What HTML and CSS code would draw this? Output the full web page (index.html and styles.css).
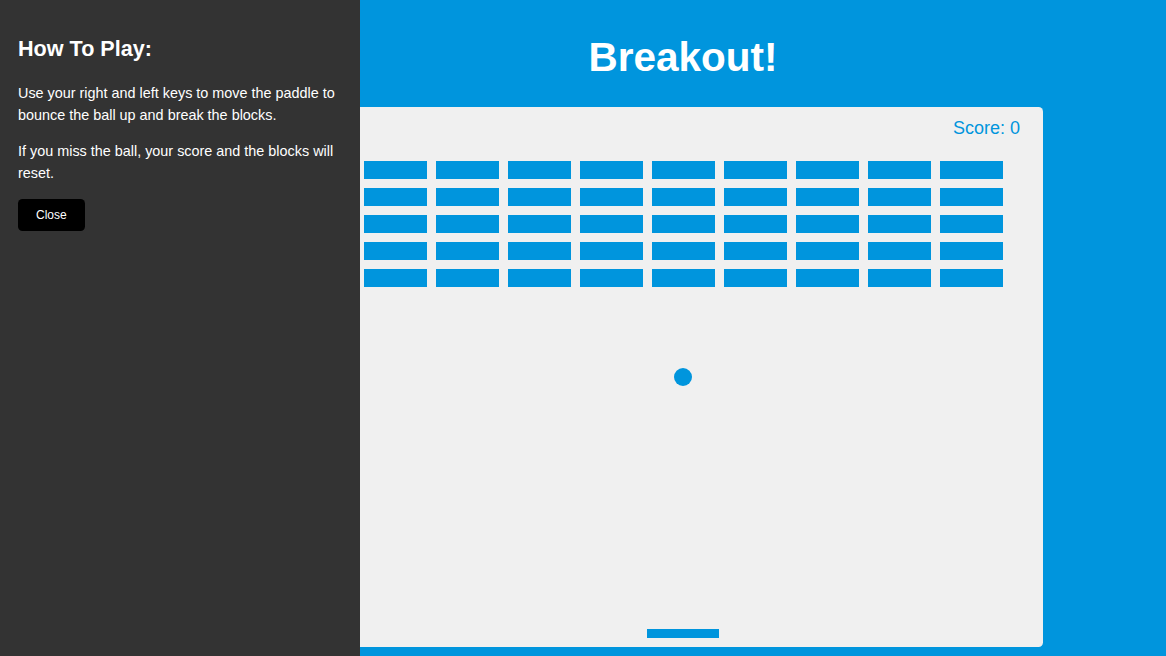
FILE: index.html
```html
<!DOCTYPE html>
<html lang="en">
<head>
<meta charset="UTF-8">
<title>Breakout!</title>
<link rel="stylesheet" href="styles.css">
</head>
<body>
  <aside class="rules">
    <h2 class="rules-title">How To Play:</h2>
    <p class="rules-text">Use your right and left keys to move the paddle to bounce the ball up and break the blocks.</p>
    <p class="rules-text">If you miss the ball, your score and the blocks will reset.</p>
    <button class="btn">Close</button>
  </aside>

  <main class="stage">
    <h1 class="title">Breakout!</h1>
    <div class="board">
      <div class="score">Score: 0</div>
      <div class="bricks">
        <span class="brick"></span><span class="brick"></span><span class="brick"></span><span class="brick"></span><span class="brick"></span><span class="brick"></span><span class="brick"></span><span class="brick"></span><span class="brick"></span>
        <span class="brick"></span><span class="brick"></span><span class="brick"></span><span class="brick"></span><span class="brick"></span><span class="brick"></span><span class="brick"></span><span class="brick"></span><span class="brick"></span>
        <span class="brick"></span><span class="brick"></span><span class="brick"></span><span class="brick"></span><span class="brick"></span><span class="brick"></span><span class="brick"></span><span class="brick"></span><span class="brick"></span>
        <span class="brick"></span><span class="brick"></span><span class="brick"></span><span class="brick"></span><span class="brick"></span><span class="brick"></span><span class="brick"></span><span class="brick"></span><span class="brick"></span>
        <span class="brick"></span><span class="brick"></span><span class="brick"></span><span class="brick"></span><span class="brick"></span><span class="brick"></span><span class="brick"></span><span class="brick"></span><span class="brick"></span>
      </div>
      <div class="ball"></div>
      <div class="paddle"></div>
    </div>
  </main>
</body>
</html>
```

FILE: styles.css
```css
* {
  box-sizing: border-box;
}

html, body {
  margin: 0;
  padding: 0;
}

body {
  background: #0095dd;
  font-family: "Liberation Sans", Arial, sans-serif;
  height: 656px;
  overflow: hidden;
}

/* sidebar overlays the game */
.rules {
  position: absolute;
  top: 0;
  left: 0;
  width: 360px;
  height: 656px;
  background: #333;
  color: #fff;
  padding: 18px;
  line-height: 1.5;
  z-index: 2;
}

.rules-title {
  font-size: 21.6px;
  font-weight: bold;
  margin: 15px 0 18px;
}

.rules-text {
  font-size: 14.4px;
  margin: 14.4px 0;
}

.btn {
  display: block;
  border: 0;
  padding: 9px 18px;
  background: #000;
  color: #fff;
  border-radius: 4.5px;
  font-family: "Liberation Sans", Arial, sans-serif;
  font-size: 12px;
  line-height: normal;
  cursor: pointer;
}

.stage {
  display: flex;
  flex-direction: column;
  align-items: center;
  padding: 7px 0 0 200px;
}

.title {
  margin: 27px 0;
  font-size: 40.5px;
  line-height: 46px;
  font-weight: bold;
  color: #fff;
}

.board {
  width: 720px;
  height: 540px;
  background: #f0f0f0;
  border-radius: 4.5px;
  display: flex;
  flex-direction: column;
}

.score {
  margin-top: 12px;
  padding-left: 630px;
  height: 18px;
  font-size: 18px;
  line-height: 18px;
  color: #0095dd;
  white-space: nowrap;
}

.bricks {
  margin: 24px 0 0 40.5px;
  display: grid;
  grid-template-columns: repeat(9, 63px);
  grid-auto-rows: 18px;
  gap: 9px;
}

.brick {
  background: #0095dd;
}

.ball {
  align-self: center;
  margin-top: 81px;
  width: 18px;
  height: 18px;
  border-radius: 50%;
  background: #0095dd;
}

.paddle {
  align-self: center;
  margin-top: 243px;
  width: 72px;
  height: 9px;
  background: #0095dd;
}
```
